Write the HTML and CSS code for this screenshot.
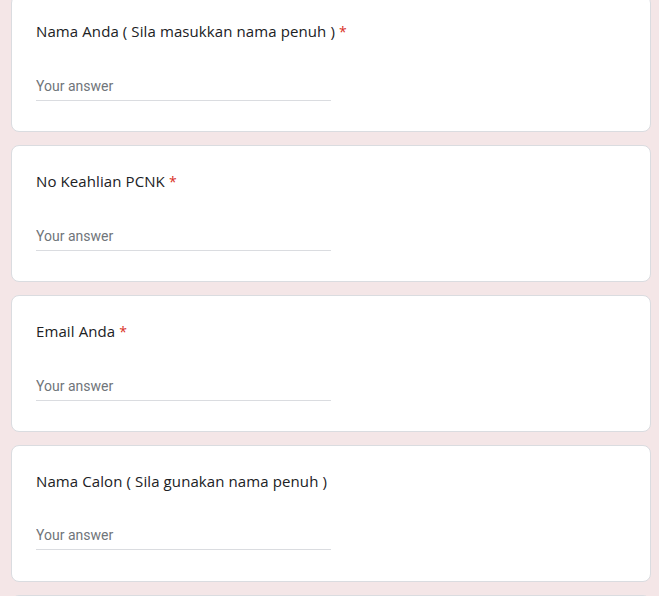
FILE: index.html
```html
<!DOCTYPE html>
<html lang="en">
<head>
    <meta charset="UTF-8">
    <meta name="viewport" content="width=device-width, initial-scale=1.0">
    <title>Borang</title>
    <link rel="stylesheet" href="styles.css">
</head>
<body>

    <div class="form-list">
        <div class="question-card">
            <div class="question-title">Nama Anda ( Sila masukkan nama penuh ) <span class="required">*</span></div>
            <input type="text" class="answer" placeholder="Your answer">
        </div>

        <div class="question-card">
            <div class="question-title">No Keahlian PCNK <span class="required">*</span></div>
            <input type="text" class="answer" placeholder="Your answer">
        </div>

        <div class="question-card">
            <div class="question-title">Email Anda <span class="required">*</span></div>
            <input type="text" class="answer" placeholder="Your answer">
        </div>

        <div class="question-card">
            <div class="question-title">Nama Calon ( Sila gunakan nama penuh )</div>
            <input type="text" class="answer" placeholder="Your answer">
        </div>

        <div class="question-card"></div>
    </div>

</body>
</html>
```

FILE: styles.css
```css
body {
    margin: 0;
    background-color: #f4e6e7;
    font-family: "Open Sans", Arial, sans-serif;
    overflow: hidden;
}
.form-list {
    display: flex;
    flex-direction: column;
    gap: 13px;
    width: 640px;
    margin: -5px 0 0 11px;
}
.question-card {
    background-color: #fff;
    border: 1px solid #dadce0;
    border-radius: 8px;
    padding: 23px 24px 31px;
    height: 137px;
    box-sizing: border-box;
    flex-shrink: 0;
}
.question-title {
    font-size: 15px;
    line-height: 24px;
    color: #202124;
    letter-spacing: 0.1px;
}
.required {
    color: #d93025;
    font-size: 14px;
}
.answer {
    display: block;
    width: 50%;
    margin-top: 32px;
    padding: 0 0 4px;
    border: none;
    border-bottom: 1px solid #dadce0;
    font-family: Roboto, Arial, sans-serif;
    font-size: 14px;
    line-height: 20px;
    color: #202124;
    outline: none;
}
.answer::placeholder {
    color: #70757a;
}
```
